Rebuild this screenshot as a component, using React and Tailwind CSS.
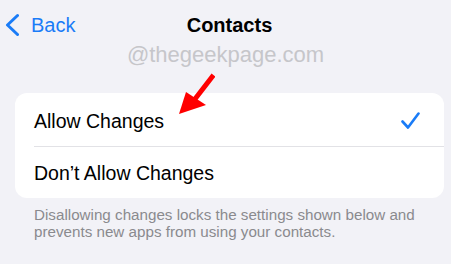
import React from "react";

const Chevron = () => (
  <svg width="14" height="24" viewBox="0 0 14 24" fill="none" className="ml-[5px] shrink-0">
    <path d="M12.5 2.5 L2.5 12 L12.5 21.5" stroke="#1a7cf7" strokeWidth="3" strokeLinecap="round" strokeLinejoin="round" />
  </svg>
);

const Check = () => (
  <svg width="20" height="18" viewBox="401 111 20 18" fill="none">
    <path d="M402.5 120.5 L408 126.5 L418.5 112.5" stroke="#1a7cf7" strokeWidth="2.6" strokeLinecap="round" strokeLinejoin="round" />
  </svg>
);

const RedArrow = () => (
  <svg
    className="absolute left-[170px] top-[70px] pointer-events-none"
    width="45"
    height="50"
    viewBox="170 70 45 50"
  >
    <path d="M212 77 L195 99" stroke="#ff0000" strokeWidth="5" strokeLinecap="square" />
    <polygon points="179,114 186,92 206,105" fill="#ff0000" />
  </svg>
);

const App = () => {
  return (
    <div className="relative w-[451px] h-[264px] overflow-hidden bg-[#f2f2f7] font-['Liberation_Sans',Arial,sans-serif]">
      <div className="grid grid-cols-[1fr_auto_1fr] items-center h-6 mt-[13px]">
        <div className="flex items-center gap-3">
          <Chevron />
          <span className="text-[20px] leading-6 text-[#1a7cf7]">Back</span>
        </div>
        <div className="ml-2 text-[20px] leading-6 font-bold text-black">Contacts</div>
        <div />
      </div>

      <div className="mt-[5px] text-center text-[22px] leading-[26px] text-[#c6c6ca]">
        @thegeekpage.com
      </div>

      <div className="mt-[25px] mx-[15px] w-[429px] bg-white rounded-[12px] overflow-hidden">
        <div className="flex items-center justify-between h-[53px] pt-[3px] pl-[19px] pr-[23px]">
          <span className="text-[19.5px] leading-6 text-black">Allow Changes</span>
          <Check />
        </div>
        <div className="ml-[19px] h-px bg-[#e2e2e6]" />
        <div className="flex items-center h-[51px] pl-[19px]">
          <span className="text-[19.5px] leading-6 text-black">Don’t Allow Changes</span>
        </div>
      </div>

      <p className="mt-[9px] px-[34px] text-[15.2px] leading-[16.5px] text-[#8a8a8e]">
        Disallowing changes locks the settings shown below and prevents new apps from using your contacts.
      </p>

      <RedArrow />
    </div>
  );
};

export default App;
